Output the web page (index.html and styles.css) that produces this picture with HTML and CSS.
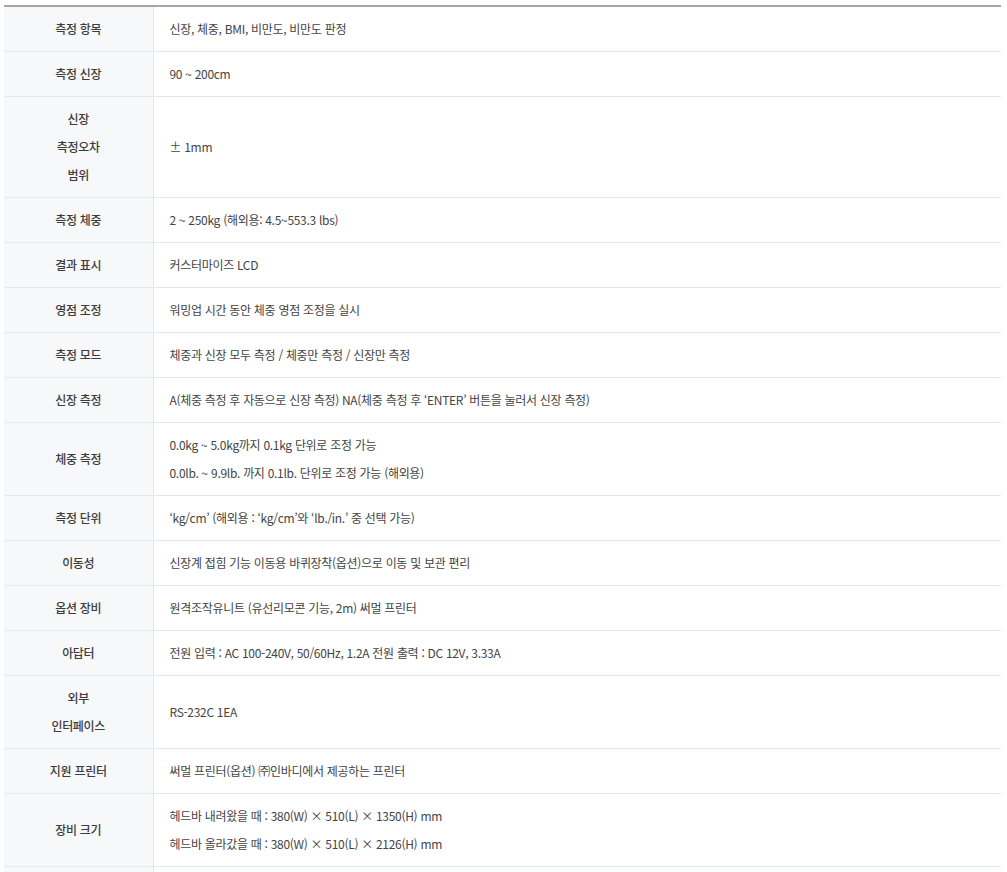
FILE: index.html
```html
<!DOCTYPE html>
<html lang="ko">

<head>
    <meta charset="UTF-8">
    <title>제품 사양</title>
    <link rel="stylesheet" href="styles.css">
</head>

<body>
    <div class="spec-wrap">
        <table class="spec-table">
            <colgroup>
                <col class="col-label">
                <col>
            </colgroup>
            <tbody>
                <tr>
                    <th>측정 항목</th>
                    <td>신장, 체중, BMI, 비만도, 비만도 판정</td>
                </tr>
                <tr>
                    <th>측정 신장</th>
                    <td>90 ~ 200cm</td>
                </tr>
                <tr>
                    <th>신장<br>측정오차<br>범위</th>
                    <td>± 1mm</td>
                </tr>
                <tr>
                    <th>측정 체중</th>
                    <td>2 ~ 250kg (해외용: 4.5~553.3 lbs)</td>
                </tr>
                <tr>
                    <th>결과 표시</th>
                    <td>커스터마이즈 LCD</td>
                </tr>
                <tr>
                    <th>영점 조정</th>
                    <td>워밍업 시간 동안 체중 영점 조정을 실시</td>
                </tr>
                <tr>
                    <th>측정 모드</th>
                    <td>체중과 신장 모두 측정 / 체중만 측정 / 신장만 측정</td>
                </tr>
                <tr>
                    <th>신장 측정</th>
                    <td>A(체중 측정 후 자동으로 신장 측정) NA(체중 측정 후 ‘ENTER’ 버튼을 눌러서 신장 측정)</td>
                </tr>
                <tr>
                    <th>체중 측정</th>
                    <td>0.0kg ~ 5.0kg까지 0.1kg 단위로 조정 가능<br>0.0lb. ~ 9.9lb. 까지 0.1lb. 단위로 조정 가능 (해외용)</td>
                </tr>
                <tr>
                    <th>측정 단위</th>
                    <td>‘kg/cm’ (해외용 : ‘kg/cm’와 ‘lb./in.’ 중 선택 가능)</td>
                </tr>
                <tr>
                    <th>이동성</th>
                    <td>신장계 접힘 기능 이동용 바퀴장착(옵션)으로 이동 및 보관 편리</td>
                </tr>
                <tr>
                    <th>옵션 장비</th>
                    <td>원격조작유니트 (유선리모콘 기능, 2m) 써멀 프린터</td>
                </tr>
                <tr>
                    <th>아답터</th>
                    <td>전원 입력 : AC 100-240V, 50/60Hz, 1.2A 전원 출력 : DC 12V, 3.33A</td>
                </tr>
                <tr>
                    <th>외부<br>인터페이스</th>
                    <td>RS-232C 1EA</td>
                </tr>
                <tr>
                    <th>지원 프린터</th>
                    <td>써멀 프린터(옵션) ㈜인바디에서 제공하는 프린터</td>
                </tr>
                <tr>
                    <th>장비 크기</th>
                    <td>헤드바 내려왔을 때 : 380(W) × 510(L) × 1350(H) mm<br>헤드바 올라갔을 때 : 380(W) × 510(L) × 2126(H) mm</td>
                </tr>
                <tr>
                    <th>&nbsp;</th>
                    <td>&nbsp;</td>
                </tr>
            </tbody>
        </table>
    </div>
</body>

</html>
```

FILE: styles.css
```css
body {
    margin: 0;
    background-color: #ffffff;
}

.spec-wrap {
    padding: 5px 6px 0 4px;
}

.spec-table {
    width: 100%;
    border-collapse: collapse;
    border-top: 2px solid #a5a5a5;
    font-family: "Noto Sans CJK KR", "Noto Sans", sans-serif;
    font-size: 12px;
    letter-spacing: -0.3px;
    color: #444444;
}

.col-label {
    width: 149px;
}

.spec-table th,
.spec-table td {
    padding: 8px 16px;
    line-height: 28px;
    border-bottom: 1px solid #e3e8ec;
    vertical-align: middle;
}

.spec-table th {
    background-color: #f7f8fa;
    border-right: 1px solid #e3e8ec;
    font-weight: 500;
    text-align: center;
    color: #3c3c3c;
}

.spec-table td {
    text-align: left;
    font-weight: 400;
}
```
